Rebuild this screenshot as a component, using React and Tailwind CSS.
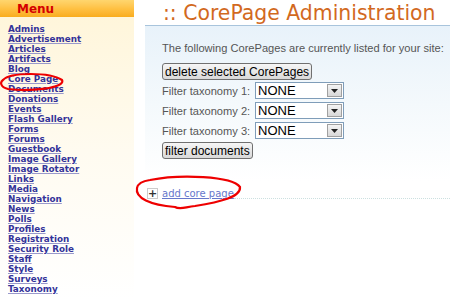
import React from "react";

const links = ["Admins","Advertisement","Articles","Artifacts","Blog","Core Page","Documents","Donations","Events","Flash Gallery","Forms","Forums","Guestbook","Image Gallery","Image Rotator","Links","Media","Navigation","News","Polls","Profiles","Registration","Security Role","Staff","Style","Surveys","Taxonomy"];

function Select() {
  return (
    <div className="flex h-[17px] w-[89px] items-center border border-[#7f9db9] bg-white">
      <span className="flex-1 pl-[2px] text-[13px] leading-none text-black" style={{fontFamily: '"Liberation Sans", Arial, sans-serif'}}>NONE</span>
      <span className="mr-[1px] flex h-[13px] w-[15px] items-center justify-center border border-[#a0a0a0] bg-gradient-to-b from-[#f4f4f4] to-[#d8d8d8]">
        <svg width="7" height="4" viewBox="0 0 7 4"><path d="M0 0h7L3.5 4z" fill="#222"/></svg>
      </span>
    </div>
  );
}

function Btn({children}) {
  return (
    <div className="flex h-[17px] items-center whitespace-nowrap rounded-[3px] border border-[#707070] bg-gradient-to-b from-[#f6f6f6] to-[#d9d9d9] px-[2px] text-[12px] leading-none text-black" style={{fontFamily: '"Liberation Sans", Arial, sans-serif'}}>{children}</div>
  );
}

export default function App() {
  return (
    <div className="relative flex h-[300px] w-[450px] overflow-hidden bg-white">
      <div className="flex w-[134px] shrink-0 flex-col bg-gradient-to-b from-[#fff5d8] via-[#fffbf0] to-white">
        <div className="flex h-[17px] items-center bg-gradient-to-b from-[#ffd66e] via-[#ffc143] to-[#f9ac1c] pl-[17px]">
          <span className="text-[12px] font-bold leading-none text-[#d40000]" style={{fontFamily: '"DejaVu Sans", Verdana, sans-serif'}}>Menu</span>
        </div>
        <div className="flex flex-col items-start pl-[8px] pt-[7px]" style={{fontFamily: '"DejaVu Sans", Verdana, sans-serif'}}>
          {links.map((l) => (
            <a key={l} className="h-[10px] whitespace-nowrap text-[8.8px] font-bold leading-[10px] text-[#333399] underline decoration-[#9999cc]">{l}</a>
          ))}
        </div>
      </div>
      <div className="ml-[11px] flex min-w-0 flex-1 flex-col">
        <div className="h-[25px] whitespace-nowrap pl-[18px] pt-[1px] text-[20.4px] leading-[24px] text-[#d2691e]" style={{fontFamily: '"DejaVu Sans", Verdana, sans-serif'}}>:: CorePage Administration</div>
        <div className="flex flex-col items-start border-t border-[#a8c4dc] bg-gradient-to-b from-[#e8f2fa] via-[#f4f9fc] to-white pl-[17px] pt-[15px] pb-[22px]" style={{fontFamily: '"Liberation Sans", Arial, sans-serif'}}>
          <div className="h-[14px] whitespace-nowrap text-[11.1px] leading-[14px] text-[#555]">The following CorePages are currently listed for your site:</div>
          <div className="mt-[8px] flex"><Btn>delete selected CorePages</Btn></div>
          <div className="mt-[2px] flex flex-col gap-[3px]">
            {[1,2,3].map((n) => (
              <div key={n} className="flex h-[17px] items-center gap-[3px]">
                <span className="w-[90px] whitespace-nowrap text-[11.1px] leading-[14px] text-[#555]">Filter taxonomy {n}:</span>
                <Select />
              </div>
            ))}
          </div>
          <div className="mt-[3px] flex"><Btn>filter documents</Btn></div>
        </div>
        <div className="mt-[6px] flex items-end">
          <div className="ml-[2px] flex items-center gap-[4px]">
            <span className="flex h-[11px] w-[11px] items-center justify-center border border-[#ccc] bg-white text-[11px] font-bold leading-none text-[#333]" style={{fontFamily: '"DejaVu Sans", sans-serif'}}>+</span>
            <a className="whitespace-nowrap text-[10px] leading-[13px] text-[#6677cc] underline" style={{fontFamily: '"DejaVu Sans", Verdana, sans-serif'}}>add core page</a>
          </div>
          <div className="mb-[1px] flex-1 border-b border-dotted border-[#cce0e0]" />
        </div>
      </div>
      <svg className="pointer-events-none absolute left-0 top-0" width="450" height="300">
        <path d="M3 80 C 10 72, 50 72, 62 80 C 66 88, 30 92, 8 89 C 0 87, 0 82, 3 80 Z" fill="none" stroke="#e00" strokeWidth="2.2"/>
        <path d="M150 180 C 180 174, 232 176, 240 187 C 241 197, 220 202, 195 206 C 185 207, 180 210, 175 207 C 150 205, 135 198, 137 188 C 138 183, 143 181, 150 180 Z" fill="none" stroke="#e00" strokeWidth="2.2"/>
      </svg>
    </div>
  );
}
